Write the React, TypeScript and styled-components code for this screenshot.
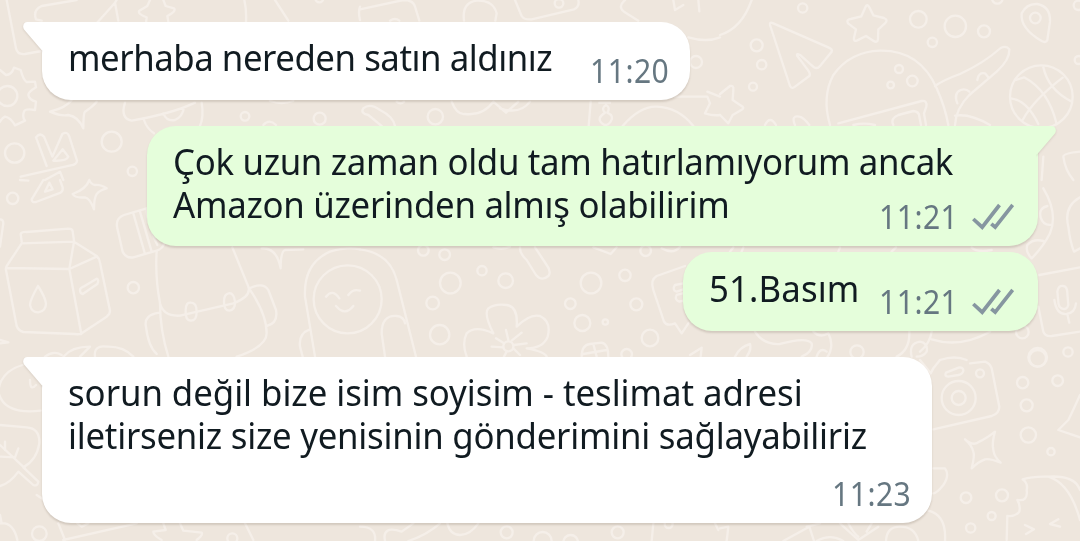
import React from 'react'
import styled, { createGlobalStyle } from 'styled-components'

const GlobalStyle = createGlobalStyle`
  body {
    margin: 0;
    background-color: #eee6dd;
  }
`

const Screen = styled.main`
  position: relative;
  width: 1080px;
  height: 541px;
  overflow: hidden;
  background-color: #eee6dd;
  font-family: 'Noto Sans', sans-serif;
`

const Doodles = styled.svg`
  position: absolute;
  inset: 0;
  fill: none;
  stroke: #f5efe9;
  stroke-width: 7;
  stroke-linecap: round;
  stroke-linejoin: round;
`

const Thread = styled.div`
  position: relative;
  display: flex;
  flex-direction: column;
  padding: 22px 42px 0;
`

interface IBubbleProps {
  $own?: boolean
  $width: number
  $height: number
  $gap?: number
  $tail?: boolean
}

const Bubble = styled.div<IBubbleProps>`
  position: relative;
  box-sizing: border-box;
  display: flex;
  justify-content: space-between;
  align-self: ${p => (p.$own ? 'flex-end' : 'flex-start')};
  width: ${p => p.$width}px;
  height: ${p => p.$height}px;
  margin-top: ${p => p.$gap || 0}px;
  padding: ${p => (p.$tail ? 13 : 14)}px 21px 0 26px;
  border-radius: 29px;
  border-top-left-radius: ${p => (p.$tail && !p.$own ? 0 : 29)}px;
  border-top-right-radius: ${p => (p.$tail && p.$own ? 0 : 29)}px;
  background-color: ${p => (p.$own ? '#e5fedb' : '#fff')};
  box-shadow: 0 2px 2px rgba(80, 60, 40, 0.17);
`

const Tail = styled.svg<{ $own?: boolean }>`
  position: absolute;
  top: 0;
  ${p => (p.$own ? 'right: -18px' : 'left: -19px')};
  transform: ${p => (p.$own ? 'scaleX(-1)' : 'none')};
  fill: ${p => (p.$own ? '#e5fedb' : '#fff')};
  filter: drop-shadow(0 1px 1px rgba(80, 60, 40, 0.15));
  clip-path: inset(0 0 -4px -4px);
`

const Text = styled.div`
  flex: none;
  width: 0;
  color: #111b21;
  font-size: 37px;
  line-height: 43px;
  white-space: nowrap;
`

const Line = styled.span<{ $spacing: number }>`
  display: block;
  width: max-content;
  letter-spacing: ${p => p.$spacing}px;
  transform: scaleX(0.94);
  transform-origin: left;
`

const Meta = styled.div`
  display: flex;
  align-items: center;
  align-self: flex-end;
  gap: 14px;
  height: 40px;
  margin: 0 0 9px auto;
  color: #667781;
  font-size: 32px;
  line-height: 40px;
`

const Time = styled.time`
  letter-spacing: 0.5px;
  transform: scaleX(0.94);
  transform-origin: right;
`

const Ticks = styled.svg`
  margin-right: 3px;
  fill: none;
  stroke: #8696a0;
  stroke-width: 3.7;
`

interface IMessage {
  lines: [string, number][]
  time: string
  width: number
  height: number
  gap?: number
  own?: boolean
  tail?: boolean
}

const messages: IMessage[] = [
  { lines: [['merhaba nereden satın aldınız', -0.48]], time: '11:20', width: 648, height: 78, tail: true },
  {
    lines: [
      ['Çok uzun zaman oldu tam hatırlamıyorum ancak', -0.32],
      ['Amazon üzerinden almış olabilirim', -0.29],
    ],
    time: '11:21', width: 891, height: 120, gap: 26, own: true, tail: true,
  },
  { lines: [['51.Basım', 0.15]], time: '11:21', width: 355, height: 79, gap: 6, own: true },
  {
    lines: [
      ['sorun değil bize isim soyisim - teslimat adresi', -0.04],
      ['iletirseniz size yenisinin gönderimini sağlayabiliriz', -0.25],
    ],
    time: '11:23', width: 890, height: 166, gap: 26, tail: true,
  },
]

// Wallpaper is drawn in tiles on a 3x grid: origin, outlines, then rings as [cx, cy, r]
interface ITile {
  x: number
  y: number
  paths: string[]
  rings: [number, number, number][]
}

const tiles: ITile[] = [
  {
    x: 0,
    y: 0,
    paths: [
      'M20 0L48 145Q52 165 75 162L125 153',
      'M230 0L125 18Q98 30 108 58L125 62M290 70L345 8L355 62M350 0L345 8',
      'M450 0L442 18L418 32Q412 42 440 52L438 70M490 0L497 18L522 25Q530 34 502 48L505 65',
      'M733 0Q740 30 738 65M825 0L865 62M1080 20Q1074 35 1080 60',
      'M0 210L18 225Q35 225 42 203L62 210Q70 240 80 246L105 245L108 262Q85 276 85 285Q88 300 108 305L105 330Q75 325 72 335Q66 350 75 362L45 376Q32 353 15 350Q5 355 0 365',
      'M215 300Q200 322 150 335Q185 350 205 345Q235 350 250 385Q250 340 255 335Q280 318 290 305',
      'M375 308Q360 355 395 362Q520 340 585 308M605 308Q612 350 600 378M432 360Q440 385 462 400M490 340Q500 365 525 360Q548 350 552 322',
      'M790 375Q808 355 828 375M810 303Q845 315 880 303',
      'M108 412Q120 396 132 410L157 470L187 402Q202 392 208 410L231 482Q230 495 212 496L62 530M108 412L140 498M160 482L188 448L205 470Q200 484 160 482M135 540L180 515L190 540',
    ],
    rings: [[958, -5, 12], [22, 288, 30], [735, 349, 13], [959, 356, 18], [335, 425, 30], [44, 459, 29], [397, 514, 14]],
  },
  {
    x: 360,
    y: 0,
    paths: [
      'M0 28L130 0Q160 0 165 20L178 62M90 62Q105 52 118 62',
      'M312 62Q305 8 350 2Q400 0 410 40L406 62',
      'M465 0L485 48Q492 60 515 58L642 28Q660 20 655 0',
      'M795 0Q772 20 792 35L835 62M940 0L945 30L970 15M1015 0L1018 34M985 112Q1040 128 1080 112',
      'M10 325Q30 308 60 330Q100 350 105 378M10 325Q0 340 25 345L65 378',
      'M275 305Q290 345 315 342Q370 348 400 305M400 305L438 338L475 305M420 325Q480 345 510 305M110 305Q122 315 132 305',
      'M692 305L686 378M718 308L750 308M738 315Q722 325 735 338Q708 355 726 370Q740 382 752 365Q764 348 742 338Q752 322 738 315M788 378Q840 318 890 320Q955 322 1000 378M945 290L1042 290L1050 310L1035 340Q1060 348 1080 345M1042 275L1080 290',
    ],
    rings: [[597, 10, 13], [1008, 186, 18], [226, 350, 23]],
  },
  {
    x: 720,
    y: 0,
    paths: [
      'M95 0Q65 85 0 105',
      'M150 75L210 258Q216 268 225 260L268 228Q272 222 265 212L232 168Q228 158 240 165L282 202Q292 208 300 198L335 155Q338 147 325 142L160 70Q148 65 150 75Z',
      'M438 18Q443 12 448 22L460 46L492 54Q506 60 495 70L475 88L474 118Q472 130 460 122L438 108L412 121Q400 126 402 113L408 88L384 70Q378 59 392 57L424 49Z',
      'M330 375Q305 290 340 225Q390 155 480 152Q600 150 650 265Q675 320 685 375',
      'M645 258Q670 240 720 222Q790 190 842 144Q860 136 868 148Q870 178 830 215L748 285Q708 325 705 375',
      'M772 240Q775 216 795 220L805 232M712 310Q700 280 722 270Q738 265 748 275M705 347Q750 340 810 375',
      'M355 370L605 303Q622 300 619 320L612 340L618 375M520 375Q510 355 535 345L580 333Q598 335 598 350L603 375M400 375Q430 367 465 375',
      'M905 40Q920 10 952 12Q992 20 990 65L982 120Q978 130 965 123Q900 85 905 40Z',
      'M888 240L912 232Q985 270 1010 372M970 202Q985 270 1055 305M1028 233Q940 300 908 360M872 295Q920 300 955 372',
      'M0 282L30 258Q42 255 40 270L38 300L68 320Q74 326 60 332L38 345L25 370L0 345',
      'M135 375Q150 345 168 375M225 375Q212 345 238 350Q250 352 268 375',
      'M1080 455Q1030 460 1030 470Q1035 510 1060 540M970 470L965 540',
    ],
    rings: [[248, 24, 14], [110, 136, 18], [125, 194, 14], [99, 260, 12], [595, 58, 25], [706, 79, 32], [792, 94, 18], [637, 127, 14], [537, 207, 12], [577, 243, 16], [512, 255, 10], [946, 54, 16], [964, 290, 94], [1076, 180, 12], [832, -5, 16], [1075, 16, 14]],
  },
  {
    x: 0,
    y: 180,
    paths: [
      'M60 0L85 2M130 0L95 58Q95 68 108 66L182 38Q190 32 188 22L180 0M135 35L148 8L158 28Z',
      'M268 0Q258 28 218 42Q225 55 255 52Q270 55 282 88Q282 55 290 42Q300 30 320 25Q300 12 285 15Q272 12 268 0',
      'M0 118Q10 118 10 130L0 200',
      'M65 185L62 162Q65 155 80 156L205 146Q218 146 218 155L222 182M65 190L222 185L290 228Q298 235 300 248L330 392Q330 402 320 410L245 460Q240 464 225 462L70 456Q55 452 50 438L18 270Q16 262 22 255L65 190M20 264L208 267L290 230M208 267L222 185M208 267L244 462',
      'M114 318Q90 360 90 375Q95 398 115 397Q138 394 138 370Q135 350 114 318M240 330Q240 324 250 320L290 296Q298 298 292 312L248 342Q240 340 240 330',
      'M440 85L372 105Q345 115 352 145L368 215Q378 236 400 232L470 212M400 100L435 222M420 95L455 215M440 85Q438 120 472 195M470 212Q490 205 492 190',
      'M470 215Q465 290 480 370Q490 410 540 407L700 370Q755 350 745 320L697 202M745 322Q800 400 800 460Q800 500 710 530M480 370Q480 450 505 530M478 398Q430 405 438 440Q445 500 470 522M748 325Q790 305 805 330L828 390Q835 430 800 438',
      'M573 368Q558 365 557 390Q555 422 573 422Q590 422 590 395Q590 368 573 368ZM686 340Q672 342 672 365Q672 392 688 392Q706 390 705 365Q702 338 686 340Z',
      'M785 205Q830 202 842 265Q842 215 855 210L910 208M0 480L25 487L0 490',
      'M945 530L915 350Q910 250 990 215Q1040 200 1080 208M930 448Q895 460 900 500L908 530M978 350Q998 325 1018 355M1045 345Q1060 325 1080 332M1008 378Q1035 410 1060 378',
      'M135 530Q160 510 185 525M190 530Q215 500 270 500L240 530M285 530Q280 495 320 500Q370 498 400 530',
    ],
    rings: [[38, 55, 17], [400, 323, 17], [1043, 358, 102]],
  },
  {
    x: 360,
    y: 180,
    paths: [
      'M0 208Q90 220 110 300L168 530M75 530L65 460Q65 405 110 408Q132 410 135 430',
      'M480 202Q478 220 500 240L528 285Q545 305 565 288Q575 275 560 255L525 202M700 202L752 222L770 202M400 202Q430 210 450 200M905 205Q940 225 960 200',
      'M320 530Q305 490 320 460Q345 435 400 460Q370 400 385 385Q405 370 440 375Q475 380 470 440Q510 400 540 408Q575 425 563 470Q550 505 500 505Q555 515 560 530',
      'M445 480L438 450M455 482L485 458M462 495L500 490M460 505L480 525M440 515L432 530M430 502L395 500M432 490L408 475',
      'M975 258L890 288Q870 300 880 330L912 425Q920 440 945 430L965 460L985 430M970 310L945 315Q935 330 950 335L970 328M968 340L950 345Q942 358 958 365L970 362',
      'M665 530Q665 495 690 492L725 488Q745 492 745 530M670 522L740 510M700 492L710 530M990 525L1025 503L1022 530',
    ],
    rings: [[190, 211, 16], [254, 224, 16], [366, 272, 14], [437, 302, 22], [271, 309, 31], [218, 369, 19], [239, 464, 29], [693, 309, 31], [795, 286, 17], [631, 371, 16], [829, 373, 18], [667, 429, 24], [736, 426, 8], [870, 474, 25], [800, 523, 16], [857, 212, 16], [445, 499, 15]],
  },
  {
    x: 720,
    y: 180,
    paths: [
      'M970 25Q1015 100 990 160Q970 200 935 235Q915 215 922 195Q940 175 970 183M982 78Q955 85 962 112Q970 138 995 134M1080 52Q1030 80 1045 140Q1050 185 1062 215L1080 205',
      'M958 285L1080 262M955 380L970 455Q975 470 995 468L1080 455',
      'M1012 335Q1015 315 1030 318Q1042 320 1042 340L1045 375Q1040 392 1025 385Q1015 380 1015 365ZM1003 360Q1010 405 1040 402Q1065 398 1068 370M1042 403L1048 428',
      'M30 215L40 202M70 202L65 215M355 215L360 202M515 215L528 202M755 202Q770 218 815 210',
      'M105 455Q130 495 180 492Q260 470 275 490Q280 515 245 530M280 455Q300 475 325 460Q345 500 320 535M568 455Q570 510 530 530M635 455Q630 490 600 515M635 478Q720 505 810 455M45 530Q60 500 90 492Q95 510 80 530M575 530Q565 490 600 485Q625 490 620 515Q610 530 590 530M290 530Q300 500 320 515M660 540Q705 525 740 540',
    ],
    rings: [[907, 456, 19], [953, 532, 28], [1044, 516, 14], [411, 516, 20]],
  },
  {
    x: 0,
    y: 360,
    paths: [
      'M68 15Q0 35 -5 95Q10 165 122 152M90 60Q90 95 108 75',
      'M0 195L80 202Q120 205 118 250Q110 300 70 322M70 322L115 365Q112 380 100 375L55 335Q30 370 0 378M75 325L0 255M0 290L45 292L55 265M15 270L15 245M110 405L125 415',
      'M0 490Q40 485 52 540M0 465L5 490M175 490L195 540M190 540L410 490M232 490L245 500L265 490',
      'M490 490L497 510L460 515Q460 525 485 540M540 490L550 512L605 518Q610 525 590 540M735 490L760 540',
    ],
    rings: [[118, 521, 22], [697, 535, 15]],
  },
  {
    x: 360,
    y: 360,
    paths: [
      'M0 500Q50 500 45 543M75 543Q65 495 125 515L160 490M145 543Q200 525 240 490M262 490Q270 525 300 525Q330 525 355 490M880 490L875 543M1065 490L1075 510',
    ],
    rings: [[440, 517, 18], [548, 543, 27], [632, 547, 22], [773, 517, 18], [926, 492, 12]],
  },
  {
    x: 720,
    y: 360,
    paths: [
      'M600 0L632 40L640 25L660 0M750 10L795 5Q810 10 815 25L838 140Q838 160 815 168L640 208M678 38L718 22Q730 22 730 32Q728 42 715 45L685 50Q672 48 678 38Z',
      'M735 238Q760 260 778 245Q800 235 825 215Q815 250 820 270Q822 290 842 308Q810 295 795 298Q775 305 755 325Q765 285 760 275Q755 255 735 238Z',
      'M640 325L675 325Q690 345 670 375Q650 400 640 400M1080 105Q1060 150 1045 180L1015 210L1080 232',
      'M860 540L862 468Q885 470 898 455Q902 435 892 420Q925 425 920 390Q925 370 908 358Q940 348 985 350Q1050 370 1080 480M985 350Q1065 345 1080 390M915 495L942 508L918 522M1015 478L990 492L1020 500',
      'M0 505L25 500L20 543M190 543L268 500L282 543M260 500L300 490M360 490L415 540L475 500M385 490Q400 520 415 530M498 543Q500 500 540 500Q585 500 595 543M625 452Q680 465 675 543M290 543Q330 520 370 543M440 515L455 490',
    ],
    rings: [[716, 114, 51], [716, 114, 21], [780, 40, 12], [908, 68, 17], [1013, 62, 16], [920, 136, 18], [925, 225, 23], [993, 275, 11], [738, 413, 16], [846, 406, 18], [815, 468, 12], [752, 504, 14], [953, -5, 25]],
  },
]

const Wallpaper: React.FC = () => (
  <Doodles width="1080" height="541" aria-hidden="true">
    {tiles.map(tile => (
      <g key={`${tile.x}-${tile.y}`} transform={`translate(${tile.x} ${tile.y}) scale(0.33333)`}>
        {tile.paths.map(d => <path key={d} d={d} />)}
        {tile.rings.map(([cx, cy, r]) => <circle key={`${cx}-${cy}-${r}`} cx={cx} cy={cy} r={r} />)}
      </g>
    ))}
  </Doodles>
)

const Message: React.FC<IMessage> = ({ lines, time, width, height, gap, own, tail }) => (
  <Bubble $own={own} $width={width} $height={height} $gap={gap} $tail={tail}>
    {tail && (
      <Tail $own={own} width="20" height="30">
        <path d="M20 0H4.5C0.6 0-1.2 4.6 1.3 7.8L19 28.5H20Z" />
      </Tail>
    )}
    <Text>
      {lines.map(([line, spacing]) => <Line key={line} $spacing={spacing}>{line}</Line>)}
    </Text>
    <Meta>
      <Time>{time}</Time>
      {own && (
        <Ticks width="42" height="28" viewBox="0 0 42 28">
          <path d="M1.3 16L10.2 24.2L27.5 2M19.3 20.8L23.2 24.2L40.7 2" />
        </Ticks>
      )}
    </Meta>
  </Bubble>
)

const App: React.FC = () => (
  <Screen>
    <GlobalStyle />
    <Wallpaper />
    <Thread>
      {messages.map(message => <Message key={message.lines[0][0]} {...message} />)}
    </Thread>
  </Screen>
)

export default App
